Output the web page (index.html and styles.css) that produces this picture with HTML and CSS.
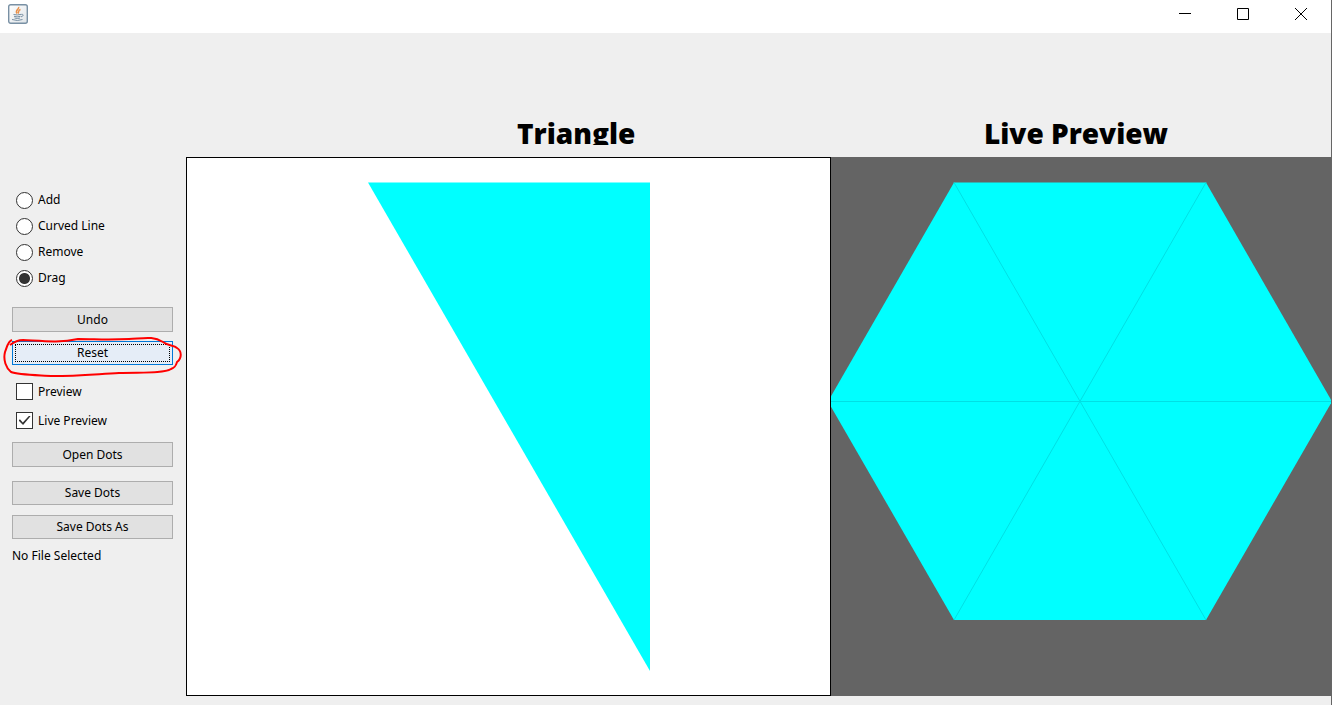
FILE: index.html
```html
<!DOCTYPE html>
<html lang="en">
<head>
<meta charset="utf-8">
<title>Triangle</title>
<link rel="stylesheet" href="styles.css">
</head>
<body>
<div class="window">
  <header class="titlebar">
    <svg class="app-icon" viewBox="0 0 20 20" aria-hidden="true">
      <defs><linearGradient id="tile" x1="0" y1="0" x2="1" y2="1"><stop offset="0" stop-color="#fff"/><stop offset="1" stop-color="#dfe4e8"/></linearGradient></defs>
      <rect x="0.7" y="0.7" width="18.6" height="18.6" rx="2" fill="url(#tile)" stroke="#7890a4" stroke-width="1.4"/>
      <path d="M10.500 3C12 5 6.500 6 9 9.500M12.500 5.500C9.500 6.500 11.500 7.500 10 9.500" fill="none" stroke="#e8904a" stroke-width="1.5"/>
      <path d="M5.500 10.500Q9 11.500 13.500 10.300M6 12.300Q9 13.500 12.500 12.300M6.500 14Q9.500 15 12 14M4 15.500Q9.500 17.500 14.500 15.500M13.500 10.500C16 9.800 15.500 12.500 13 12.800" fill="none" stroke="#7890a4" stroke-width="1"/>
    </svg>
    <div class="window-controls">
      <button class="window-button" type="button" aria-label="Minimize"><svg viewBox="0 0 12 12"><path d="M0 5.500H12"/></svg></button>
      <button class="window-button" type="button" aria-label="Maximize"><svg viewBox="0 0 12 12"><path d="M.5 .5H11.500V11.500H.5Z"/></svg></button>
      <button class="window-button" type="button" aria-label="Close"><svg viewBox="0 0 12 12"><path d="M0 0L12 12M12 0L0 12"/></svg></button>
    </div>
  </header>
  <main class="workspace">
    <form class="tools">
      <div class="modes">
        <label class="option"><input type="radio" name="mode">Add</label>
        <label class="option"><input type="radio" name="mode">Curved Line</label>
        <label class="option"><input type="radio" name="mode">Remove</label>
        <label class="option"><input type="radio" name="mode" checked>Drag</label>
      </div>
      <div class="history">
        <button class="action" type="button">Undo</button>
        <div class="marked">
          <button class="action action-focused" type="button">Reset</button>
          <svg class="mark" viewBox="0 0 180 44" aria-hidden="true"><path d="M9 4C5 5 4 11 2 16C0 24 3 32 8 36C15 39 34 39 50 40C74 40 95 38 116 37C135 36 160 38 168 33C173 31 173 29 174 26C179 22 179 15 174 12C171 9 165 10 160 6C150 0 143 2 126 3C102 4 93 3 75 3C57 7 40 5 20 4C15 4 11 6 7 9"/></svg>
        </div>
      </div>
      <div class="views">
        <label class="option option-check"><input type="checkbox">Preview</label>
        <label class="option option-check"><input type="checkbox" checked>Live Preview</label>
      </div>
      <div class="files">
        <button class="action" type="button">Open Dots</button>
        <button class="action action-short" type="button">Save Dots</button>
        <button class="action action-short" type="button">Save Dots As</button>
      </div>
      <p class="status">No File Selected</p>
    </form>
    <section class="pane editor">
      <h2 class="pane-title">Triangle</h2>
      <div class="canvas canvas-editor">
        <svg viewBox="0 0 643 537" role="img" aria-label="Triangle"><path d="M181 24.500H463V513Z" fill="#0ff"/></svg>
      </div>
    </section>
    <section class="pane preview">
      <h2 class="pane-title">Live Preview</h2>
      <div class="canvas canvas-preview">
        <svg viewBox="0 0 500 539" role="img" aria-label="Live preview of the repeated triangle">
          <path d="M123 25.500H375L501 244.500L375 463H123L-3 244.500Z" fill="#0ff"/>
          <path d="M123 25.500L375 463M375 25.500L123 463M0 244.500H500" fill="none" stroke="#00e0e4"/>
        </svg>
      </div>
    </section>
  </main>
</div>
</body>
</html>
```
FILE: styles.css
```css
* {
  box-sizing: border-box;
}

body {
  margin: 0;
  background: #efefef;
  color: #000;
  font: 12px/16px "Noto Sans", "DejaVu Sans", sans-serif;
}

.window {
  display: flex;
  flex-direction: column;
  min-height: 100vh;
  border-right: 1px solid #666;
}

.titlebar {
  display: flex;
  justify-content: space-between;
  height: 33px;
  padding: 0 1px 0 8px;
  background: #fff;
}

.app-icon {
  width: 20px;
  height: 20px;
  margin-top: 4px;
}

.window-controls {
  display: flex;
}

.window-button {
  display: grid;
  place-items: center;
  width: 58px;
  height: 28px;
  padding: 0;
  border: 0;
  background: none;
}

.window-button svg {
  width: 12px;
  height: 12px;
  fill: none;
  stroke: #000;
}

.workspace {
  display: grid;
  flex: 1;
  grid-template-columns: 186px 645fr 500fr;
  padding: 80px 0 9px;
}

.tools {
  padding: 74px 13px 0 12px;
}

.modes,
.views {
  display: flex;
  flex-direction: column;
  padding-left: 4px;
}

.option {
  display: flex;
  align-items: center;
  gap: 5px;
  height: 26px;
  line-height: 18px;
}

.option-check {
  height: 29px;
}

.option input {
  appearance: none;
  flex: none;
  width: 17px;
  height: 17px;
  margin: 0;
  border: 1px solid #333;
  background: #fff;
}

.option input[type="radio"] {
  border-radius: 50%;
}

.option input[type="radio"]:checked {
  background: radial-gradient(circle, #333 5px, #fff 6px);
}

.option input[type="checkbox"]:checked {
  display: grid;
  place-items: center;
}

.option input[type="checkbox"]:checked::before {
  content: "";
  width: 12px;
  height: 10px;
  background: #333;
  clip-path: polygon(0 50%, 12% 38%, 36% 70%, 90% 0, 100% 8%, 38% 96%);
}

.history {
  display: flex;
  flex-direction: column;
  gap: 9px;
  margin: 16px 0 12px;
}

.action {
  display: block;
  width: 100%;
  height: 25px;
  padding: 0;
  border: 1px solid #adadad;
  background: #e1e1e1;
  color: #000;
  font: inherit;
}

.action-short {
  height: 24px;
}

.marked {
  position: relative;
}

.action-focused {
  height: 24px;
  border-color: #0078d7;
  background: #e5edf7;
  outline: 1px dotted #000;
  outline-offset: -4px;
}

.mark {
  position: absolute;
  top: -5px;
  left: -9px;
  width: 180px;
  height: 44px;
  fill: none;
  stroke: #f00;
  stroke-width: 2;
  pointer-events: none;
}

.files {
  display: grid;
  gap: 10px;
  margin-top: 7px;
}

.files .action:first-child {
  margin-bottom: 4px;
}

.status {
  margin: 9px 0 0;
}

.pane {
  display: flex;
  flex-direction: column;
  min-width: 0;
}

.pane-title {
  height: 32px;
  margin: 0 0 12px;
  font: 800 28px/40px "Open Sans", sans-serif;
}

.editor .pane-title {
  padding-left: 331px;
  overflow: hidden;
}

.preview .pane-title {
  padding-right: 10px;
  text-align: center;
}

.canvas {
  flex: 1;
  min-height: 0;
}

.canvas svg {
  display: block;
  width: 100%;
  height: 100%;
}

.canvas-editor {
  border: 1px solid #000;
  background: #fff;
}

.canvas-preview {
  background: #646464;
}
```
